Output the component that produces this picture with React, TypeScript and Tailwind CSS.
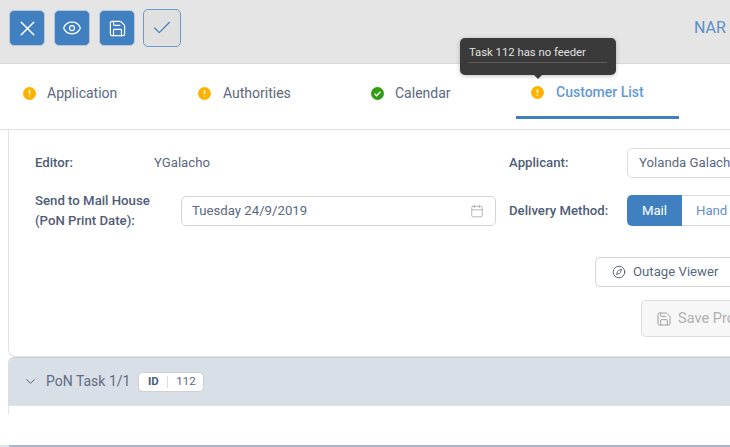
import { X, Eye, Save, Check, ChevronDown, Calendar, Compass } from "lucide-react";

const Status = ({ ok }: { ok?: boolean }) => (
  <svg width="13" height="13" viewBox="0 0 13 13" className="shrink-0">
    <circle cx="6.5" cy="6.5" r="6.5" fill={ok ? "#2f9e12" : "#ffb300"} />
    {ok ? (
      <path d="M3.6 6.7l2 2 3.8-4" fill="none" stroke="#fff" strokeWidth="1.4" />
    ) : (
      <path d="M6.5 3v4M6.5 8.4v1.4" fill="none" stroke="#fff7d6" strokeWidth="1.5" />
    )}
  </svg>
);

const tabs = [
  { label: "Application", w: "w-[175px]", pl: "pl-[9px]", cls: "text-[14px]" },
  { label: "Authorities", w: "w-[174px]", pl: "pl-[9px]", cls: "text-[14px] ml-[1px]" },
  { label: "Calendar", w: "w-[153px]", pl: "pl-[8px]", ok: true, cls: "text-[14px]" },
];

export default function App() {
  return (
    <div
      className="relative w-[730px] h-[447px] overflow-hidden bg-white text-[14px] text-[#5b6880] flex flex-col"
      style={{ fontFamily: "Roboto, sans-serif" }}
    >
      <div className="h-[64px] shrink-0 bg-[#e5e5e5] border-b border-[#d8d8d8] flex pl-[9px] pt-[10px] pr-[2px]">
        <div className="flex gap-[9px] items-start">
          <div className="w-[36px] h-[36px] rounded-[5px] bg-[#4180c0] border border-[#b9c8d8] flex items-center justify-center text-white">
            <X size={25} strokeWidth={1.4} />
          </div>
          <div className="w-[36px] h-[36px] rounded-[5px] bg-[#4180c0] border border-[#b9c8d8] flex items-center justify-center text-white">
            <Eye size={20} strokeWidth={1.5} />
          </div>
          <div className="w-[36px] h-[36px] rounded-[5px] bg-[#4180c0] border border-[#b9c8d8] flex items-center justify-center text-white">
            <Save size={19} strokeWidth={1.5} />
          </div>
          <div className="w-[38px] h-[38px] -mt-[1px] -ml-[1px] rounded-[5px] bg-[#e0e0e0] border border-[#6a9bd0] flex items-center justify-center text-[#4180c0]">
            <Check size={22} strokeWidth={1.4} />
          </div>
        </div>
        <div className="ml-auto pt-[9px] text-[16px] leading-[18px] text-[#5b8fca] w-[34px] whitespace-nowrap">NAR</div>
      </div>

      <div className="h-[66px] shrink-0 border-b border-[#e2e2e2] flex pl-[14px]">
        {tabs.map((t) => (
          <div key={t.label} className={`${t.w} ${t.pl} flex items-center gap-[11px] pb-[7px]`}>
            <Status ok={t.ok} />
            <span className={t.cls}>{t.label}</span>
          </div>
        ))}
        <div className="w-[163px] h-[55px] pl-[15px] flex items-center gap-[12px] border-b-[3px] border-[#4180c0] pt-[5px]">
          <Status />
          <span className="font-medium text-[#5f9ad6]">Customer List</span>
        </div>
      </div>

      <div className="ml-[8px] h-[227px] shrink-0 border-l border-b border-[#e2e2e2] rounded-bl-[8px] pl-[26px] pt-[18px] overflow-hidden">
        <div className="flex items-center h-[30px]">
          <div className="w-[119px] shrink-0 font-medium text-[#4e5d78] text-[13.2px]">Editor:</div>
          <div className="w-[355px] shrink-0 text-[13.2px]">YGalacho</div>
          <div className="w-[118px] shrink-0 font-medium text-[#4e5d78] text-[13.2px]">Applicant:</div>
          <div className="w-[160px] shrink-0 h-[30px] rounded-[5px] border border-[#dcdcdc] pl-[11px] flex items-center text-[13.2px] whitespace-nowrap">Yolanda Galacho</div>
        </div>

        <div className="flex items-start h-[30px] mt-[18px]">
          <div className="w-[146px] shrink-0 -mt-[5px] font-medium text-[#4e5d78] text-[13.2px] leading-[20px] whitespace-nowrap">
            Send to Mail House
            <br />
            (PoN Print Date):
          </div>
          <div className="w-[315px] shrink-0 h-[30px] rounded-[5px] border border-[#d4d4d4] pl-[10px] pr-[11px] flex items-center justify-between text-[13.2px]">
            <span>Tuesday 24/9/2019</span>
            <Calendar size={14} strokeWidth={1.2} className="text-[#999]" />
          </div>
          <div className="w-[118px] shrink-0 ml-[13px] h-[30px] flex items-center font-medium text-[#4e5d78] text-[13.2px] whitespace-nowrap">Delivery Method:</div>
          <div className="flex shrink-0 -mt-[1px] h-[31px] text-[13.2px]">
            <div className="w-[55px] bg-[#4180c0] text-white rounded-l-[5px] flex items-center justify-center">Mail</div>
            <div className="w-[80px] border-y border-[#dcdcdc] pl-[14px] flex items-center text-[#5f8fd0]">Hand</div>
          </div>
        </div>

        <div className="flex ml-[560px] mt-[31px]">
          <div className="w-[160px] shrink-0 h-[30px] rounded-[5px] border border-[#d4d4d4] pl-[16px] flex items-center gap-[7px] text-[13.2px] whitespace-nowrap">
            <Compass size={14} strokeWidth={1.6} className="text-[#56637a]" />
            Outage Viewer
          </div>
        </div>
        <div className="flex ml-[606px] mt-[13px]">
          <div className="w-[120px] shrink-0 h-[37px] rounded-[5px] border border-[#dedede] bg-[#f7f7f7] pl-[14px] flex items-center gap-[6px] text-[14.6px] text-[#b0b0b0] whitespace-nowrap">
            <Save size={16} strokeWidth={1.5} className="text-[#a0a0a0]" />
            Save Profile
          </div>
        </div>
      </div>

      <div className="ml-[8px] h-[49px] shrink-0 bg-[#d9dfe7] border-t border-[#cfcfcf] border-b-[#e2e2e2] border-b rounded-tl-[6px] flex items-center pl-[15px]">
        <ChevronDown size={15} strokeWidth={1.6} className="text-[#4e5d78]" />
        <span className="ml-[8px] text-[14px] text-[#5f6b80]">PoN Task 1/1</span>
        <div className="ml-[8px] w-[66px] h-[20px] bg-white rounded-[5px] border border-[#d0d0d0] flex items-center text-[11.5px]">
          <span className="w-[28px] text-center font-bold text-[#4e5d78]">ID</span>
          <span className="w-px h-[12px] bg-[#ddd]" />
          <span className="flex-1 text-center">112</span>
        </div>
      </div>
      <div className="ml-[8px] h-[8px] w-px shrink-0 bg-[#e2e2e2]" />
      <div className="mt-auto h-[2px] shrink-0 bg-[#a8b6ca] border-l-[9px] border-l-[#dde3ec]" />

      <div className="absolute left-[460px] top-[38px] w-[156px] h-[37px] rounded-[5px] bg-[#3a3a3a] text-[#e0e0e0] text-[11.3px] pl-[9px] pt-[8px] shadow-[0_1px_4px_rgba(0,0,0,0.25)]">
        <div className="w-[139px] h-[17px] leading-[14px] border-b border-[#5c5c5c] -ml-[1px] pl-[1px]">Task 112 has no feeder</div>
        <div className="absolute left-[74px] bottom-[-4px] w-0 h-0 border-x-[4px] border-x-transparent border-t-[4px] border-t-[#3a3a3a]" />
      </div>
    </div>
  );
}
